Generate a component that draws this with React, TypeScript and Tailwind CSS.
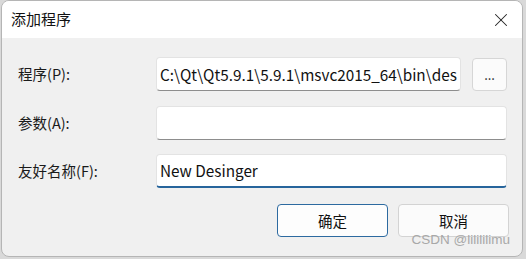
import { X } from "lucide-react";

const cjk = "font-['Microsoft_YaHei','Noto_Sans_CJK_SC',sans-serif]";

const Field = ({
  label,
  value = "",
  focused = false,
  className = "",
}: {
  label: string;
  value?: string;
  focused?: boolean;
  className?: string;
}) => (
  <div className={`flex items-center ${className}`}>
    <span className="w-[138px] shrink-0 text-[14.5px] text-[#1a1a1a]">{label}</span>
    <div
      className={`flex h-[34px] min-w-0 flex-1 items-center overflow-hidden whitespace-nowrap rounded-[4px] border border-[#e3e3e3] bg-white pl-[3px] text-[15.3px] text-[#111] ${
        focused ? "border-b-2 border-b-[#27659c]" : "border-b-[#8d8d8d]"
      }`}
    >
      {value}
    </div>
  </div>
);

export default function App() {
  return (
    <div className={`h-[259px] w-[526px] overflow-hidden bg-[#d9d9d9] ${cjk}`}>
      <div className="ml-[1px] flex h-[257px] w-[522px] flex-col overflow-hidden rounded-[8px] border border-[#b5b5b5] bg-[#f0f0f0]">
        {/* Title bar */}
        <div className="flex h-[37px] shrink-0 items-center justify-between bg-white pl-[9px] pr-[10px]">
          <span className="text-[15px] text-[#111]">添加程序</span>
          <X className="h-[22px] w-[22px] text-[#222]" strokeWidth={1.1} />
        </div>

        {/* Body */}
        <div className="relative flex flex-1 flex-col pl-[16px] pr-[15px] pt-[19px]">
          <div className="flex items-center">
            <Field label="程序(P):" value="C:\Qt\Qt5.9.1\5.9.1\msvc2015_64\bin\des" className="w-[445px]" />
            <div className="ml-[11px] flex h-[33px] w-[35px] items-center justify-center rounded-[4px] border border-[#d6d6d6] bg-[#fbfbfb] text-[13px] leading-none text-[#222]">
              ...
            </div>
          </div>
          <Field label="参数(A):" className="mt-[15px]" />
          <Field label="友好名称(F):" value="New Desinger" focused className="mt-[14px]" />

          <div className="mt-[16px] flex justify-end gap-[10px]">
            <div className="flex h-[33px] w-[111px] items-center justify-center rounded-[4px] border border-[#2d6aa0] bg-[#fdfdfd] text-[14.5px] text-[#111]">
              确定
            </div>
            <div className="mr-[-2px] flex h-[33px] w-[111px] items-center justify-center rounded-[4px] border border-[#d3d3d3] bg-[#fbfbfb] text-[14.5px] text-[#111]">
              取消
            </div>
          </div>

          {/* watermark */}
          <span className="absolute bottom-[6px] right-[12px] font-['Liberation_Sans',sans-serif] text-[13.5px] text-[#a8a8a8]">
            CSDN @lilililimu
          </span>
        </div>
      </div>
    </div>
  );
}
